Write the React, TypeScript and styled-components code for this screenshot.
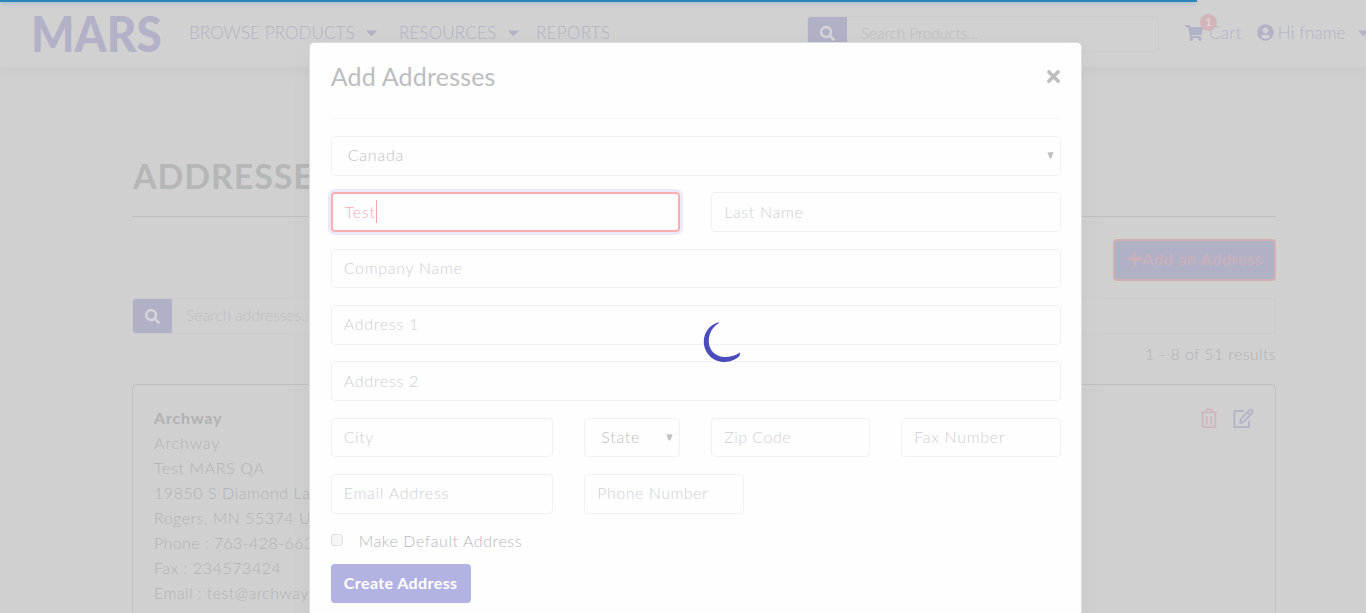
import React from "react";
import styled, { createGlobalStyle } from "styled-components";
import { FaSearch, FaShoppingCart, FaUserCircle, FaTimes, FaPlus, FaCaretDown } from "react-icons/fa";

const Global = createGlobalStyle`
  *, *::before, *::after { box-sizing: border-box; }
  body { margin: 0; overflow: hidden; background: #d0d0d0; }
  #root { font-family: Lato, "Open Sans", sans-serif; font-size: 16px; font-weight: 300; color: #b1b2b3; }
`;

const Page = styled.div`
  position: relative;
  height: 613px;
  overflow: hidden;
  background: #d0d0d0;
`;

const Progress = styled.div`
  position: absolute;
  z-index: 5;
  top: 0;
  left: 0;
  width: 1197px;
  height: 2px;
  background: #2d86bb;
  box-shadow: 0 1px 4px rgba(45, 134, 187, 0.45);
`;

const Header = styled.header`
  display: flex;
  align-items: center;
  height: 67px;
  padding-left: 31px;
  background: #d1d1d1;
  box-shadow: 0 5px 14px rgba(0, 0, 0, 0.03);
  color: #b1b1c7;
  white-space: nowrap;

  > * { flex-shrink: 0; }
`;

const Logo = styled.div`
  width: 158px;
  font-size: 49px;
  line-height: 64px;
  padding-bottom: 2px;
  font-weight: 900;
  transform: scaleX(0.935);
  transform-origin: 0 50%;
`;

const NavItem = styled.div<{ $w: number; $ls?: number }>`
  display: flex;
  align-items: center;
  justify-content: space-between;
  width: ${(p) => p.$w}px;
  letter-spacing: ${(p) => p.$ls ?? 0}px;
`;

const Nav = styled.nav`
  display: flex;
  width: 618px;
  padding-bottom: 2px;
  font-size: 17px;

  > :first-child { margin-right: 19px; }
  > :nth-child(2) { margin-right: 14px; }
`;

const SearchBox = styled.div<{ $w: number; $h: number }>`
  display: flex;
  align-items: center;
  width: ${(p) => p.$w}px;
  height: ${(p) => p.$h}px;
  border: 1px solid #cccccd;
  border-radius: 4px;
  overflow: hidden;
  color: #bcbdbf;
  font-size: 15.5px;
  line-height: 20px;

  > span { padding-bottom: 2px; }
`;

const SearchIcon = styled.div`
  display: flex;
  align-items: center;
  justify-content: center;
  width: 39px;
  height: 100%;
  margin-right: 14px;
  background: #b0b0c6;
  color: #d6d6d8;
  font-size: 15px;
`;

const Account = styled.div`
  display: flex;
  align-items: center;
  margin-left: 26px;
  padding-bottom: 2px;
  font-size: 17px;
`;

const CartIcon = styled.div`
  position: relative;
  display: flex;
  width: 24px;
  font-size: 18px;
`;

const Badge = styled.span`
  position: absolute;
  top: -10px;
  left: 15px;
  width: 17px;
  height: 17px;
  border-radius: 50%;
  background: #d3b5b9;
  color: #dedcdc;
  font-size: 12px;
  font-weight: 400;
  line-height: 16px;
  text-align: center;
`;

const Spaced = styled.span<{ $ls: number; $ml?: number }>`
  letter-spacing: ${(p) => p.$ls}px;
  margin-left: ${(p) => p.$ml ?? 0}px;
`;

const Main = styled.main`
  display: flex;
  flex-direction: column;
  width: 1144px;
  margin-left: 132px;
`;

const Title = styled.h1`
  height: 150px;
  margin: 0;
  padding: 87px 0 0 1px;
  border-bottom: 1px solid #bfbfc0;
  font-size: 34px;
  line-height: 44px;
  font-weight: 700;
  letter-spacing: 0.9px;
  color: #b5b7b7;
`;

const AddButton = styled.button`
  display: flex;
  align-items: center;
  justify-content: center;
  align-self: flex-end;
  width: 163px;
  height: 42px;
  margin: 22px 0 17px;
  padding: 0 0 3px;
  border: 2px solid #d2afb1;
  border-radius: 4px;
  background: #b0b0c6;
  color: #d0b0b8;
  font: 400 16px Lato, sans-serif;
  letter-spacing: 0.75px;
  white-space: nowrap;
`;

const Results = styled.div`
  align-self: flex-end;
  height: 50px;
  padding-top: 8px;
  line-height: 24px;
  letter-spacing: 0.38px;
`;

const Card = styled.section`
  display: flex;
  justify-content: space-between;
  height: 300px;
  padding: 20px 21px;
  border: 1px solid #bfbfc0;
  border-radius: 4px;
`;

const AddressLine = styled.div<{ $bold?: boolean; $ls: number }>`
  height: 25px;
  line-height: 25px;
  font-weight: ${(p) => (p.$bold ? 700 : 300)};
  letter-spacing: ${(p) => p.$ls}px;
  white-space: nowrap;
`;

const CardActions = styled.div`
  display: flex;
  gap: 15px;
  padding-top: 3px;
`;

const Modal = styled.div`
  position: absolute;
  z-index: 2;
  top: 42px;
  left: 309px;
  width: 773px;
  height: 640px;
  padding: 0 21px 0 20.7px;
  border: 1px solid #dcdcdc;
  border-radius: 5px;
  background: #fefefe;
  box-shadow: 0 4px 24px rgba(0, 0, 0, 0.035);
`;

const ModalHead = styled.div`
  display: flex;
  justify-content: space-between;
  height: 76px;
  margin-bottom: 16.95px;
  border-bottom: 1px solid #f4f4f5;
  color: #bcbdbf;
`;

const ModalTitle = styled.h2`
  margin: 0;
  padding-top: 16px;
  font-size: 25px;
  line-height: 34px;
  font-weight: 400;
  letter-spacing: 0.2px;
`;

const Close = styled.div`
  padding-top: 24px;
  font-size: 19px;
  margin-right: -3px;
`;

const Form = styled.div`
  display: grid;
  grid-template-columns: repeat(12, 1fr);
  gap: 16.75px 31px;
  width: 729.9px;
`;

const Field = styled.div<{ $span: number; $ls?: number; $select?: boolean; $focus?: boolean }>`
  display: flex;
  align-items: center;
  justify-content: ${(p) => (p.$select ? "space-between" : "flex-start")};
  grid-column: span ${(p) => p.$span};
  min-width: 0;
  height: 39.6px;
  padding: ${(p) => (p.$select ? "0 6px 2px 16px" : "0 12px 2px")};
  border: ${(p) => (p.$focus ? "2px solid #ffaeb0" : "1px solid #f1f1f2")};
  border-radius: 4px;
  box-shadow: ${(p) => (p.$focus ? "0 0 0 3px #ebebf7" : "none")};
  color: ${(p) => (p.$focus ? "#ffa9b2" : p.$select ? "#c0c1c4" : "#cdd0d3")};
  letter-spacing: ${(p) => p.$ls ?? 0.6}px;
  white-space: nowrap;

  > svg { margin-top: 2px; }
`;

const Caret = styled.i`
  width: 1px;
  height: 23px;
  background: #f7a3aa;
`;

const CheckRow = styled.label`
  display: flex;
  align-items: center;
  gap: 16px;
  height: 22px;
  margin: 17px 0 11.3px;
  color: #b6b7b9;
  letter-spacing: 0.57px;

  > :last-child { padding-bottom: 2px; }
`;

const Box = styled.span`
  width: 12px;
  height: 12px;
  margin-bottom: 3px;
  border: 1px solid #e0e0e0;
  border-radius: 3px;
  background: #f6f6f6;
`;

const Submit = styled.button`
  display: block;
  width: 140px;
  height: 39px;
  padding: 0 0 2px;
  border: 0;
  border-radius: 4px;
  background: #b2b2e3;
  color: #fff;
  font: 700 16px Lato, sans-serif;
  letter-spacing: 0.4px;
`;

const Spinner = styled.svg`
  position: absolute;
  z-index: 4;
  left: 703px;
  top: 321px;
`;

const Arrow = () => (
  <svg width="7" height="7" viewBox="0 0 7 7"><path d="M.4.3h6.2L4.200 6.500H2.800z" fill="#c0c0c5" /></svg>
);

const address: [string, number][] = [
  ["Archway", 0.95],
  ["Test MARS QA", 0.65],
  ["19850 S Diamond Lake Rd", 0.55],
  ["Rogers, MN 55374 US", 0.5],
  ["Phone : 763-428-6630", 0.4],
  ["Fax : 234573424", 0.55],
  ["Email : test@archway.com", 0.45],
];

export default function App() {
  return (
    <Page>
      <Global />
      <Progress />
      <Header>
        <Logo>MARS</Logo>
        <Nav>
          <NavItem $w={191} $ls={0.08}>BROWSE PRODUCTS<FaCaretDown /></NavItem>
          <NavItem $w={123} $ls={0.15}>RESOURCES<FaCaretDown /></NavItem>
          <NavItem $w={80} $ls={0.3}>REPORTS</NavItem>
        </Nav>
        <SearchBox $w={352} $h={36}>
          <SearchIcon><FaSearch /></SearchIcon>
          <Spaced $ls={-0.1}>Search Products...</Spaced>
        </SearchBox>
        <Account>
          <CartIcon><FaShoppingCart /><Badge>1</Badge></CartIcon>
          <Spaced $ls={0.3}>Cart</Spaced>
          <Spaced as={FaUserCircle} $ls={0} $ml={15} />
          <Spaced $ls={0.1} $ml={4}>Hi fname</Spaced>
          <Spaced as={FaCaretDown} $ls={0} $ml={9} />
        </Account>
      </Header>
      <Main>
        <Title>ADDRESSES</Title>
        <AddButton><FaPlus />Add an Address</AddButton>
        <SearchBox $w={1144} $h={36}>
          <SearchIcon><FaSearch /></SearchIcon>
          <Spaced $ls={0.05}>Search addresses...</Spaced>
        </SearchBox>
        <Results>1 - 8 of 51 results</Results>
        <Card>
          <div>
            <AddressLine $bold $ls={0.8}>Archway</AddressLine>
            {address.map(([text, ls]) => <AddressLine key={text} $ls={ls}>{text}</AddressLine>)}
          </div>
          <CardActions>
            <svg width="18" height="21" viewBox="0 0 18 21" fill="none" stroke="#d0b2bb" strokeWidth="1.6">
              <path d="M1 4.5h16M2.6 4.5v13.2q0 1.5 1.5 1.5h9.8q1.5 0 1.5-1.5V4.5M5.3 4.2l1-2.2q.3-.6 1-.6h3.4q.7 0 1 .6l1 2.2M6.7 8v8.4M11.3 8v8.4" />
            </svg>
            <svg width="21" height="21" viewBox="0 0 21 21" fill="none" stroke="#b1b1c8" strokeWidth="1.7" strokeLinejoin="round">
              <path d="M11 3.2H2.2q-.8 0-.8.8v14.4q0 .8.8.8h13q.8 0 .8-.8v-5.8M7.2 15.2l.6-4.2 8.7-9q1.4-1 2.7.3 1.2 1.3 0 2.6l-8.7 9zM14.5 4.2l2.8 2.8" />
            </svg>
          </CardActions>
        </Card>
      </Main>
      <Modal>
        <ModalHead>
          <ModalTitle>Add Addresses</ModalTitle>
          <Close><FaTimes /></Close>
        </ModalHead>
        <Form>
          <Field $span={12} $ls={0.8} $select>Canada<Arrow /></Field>
          <Field $span={6} $ls={0.8} $focus>Test<Caret /></Field>
          <Field $span={6} $ls={0.7}>Last Name</Field>
          <Field $span={12} $ls={0.7}>Company Name</Field>
          <Field $span={12} $ls={0.75}>Address 1</Field>
          <Field $span={12} $ls={0.75}>Address 2</Field>
          <Field $span={4}>City</Field>
          <Field $span={2} $ls={0.7} $select>State<Arrow /></Field>
          <Field $span={3} $ls={0.5}>Zip Code</Field>
          <Field $span={3} $ls={0.7}>Fax Number</Field>
          <Field $span={4} $ls={0.75}>Email Address</Field>
          <Field $span={3} $ls={0.5}>Phone Number</Field>
        </Form>
        <CheckRow><Box /><span>Make Default Address</span></CheckRow>
        <Submit>Create Address</Submit>
      </Modal>
      <Spinner width="38" height="42" viewBox="0 0 38 42">
        <path d="M15.5 1.2C6 4 .8 12 .8 20.5c0 11.500 9 20.500 20.500 20.500 7 0 12.500-3 15.500-6.500V31.500C32 35 27 36 22 36 12.500 36 5.800 29 5.800 20.500 5.800 12 10 5.500 15.800 2.300z" fill="#4b4bbd" />
      </Spinner>
    </Page>
  );
}
